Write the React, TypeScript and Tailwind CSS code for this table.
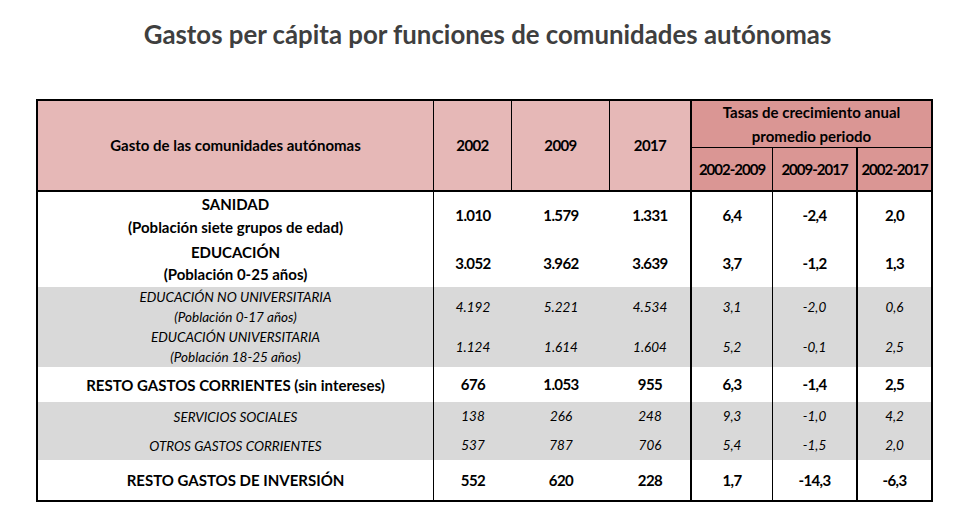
import React from "react";

type Row = {
  label: React.ReactNode;
  vals: string[];
  h: string;
  lead: string;
  gray?: boolean;
  italic?: boolean;
};

const rows: Row[] = [
  {
    label: (
      <>
        <div>SANIDAD</div>
        <div>(Población siete grupos de edad)</div>
      </>
    ),
    vals: ["1.010", "1.579", "1.331", "6,4", "-2,4", "2,0"],
    h: "h-[47px]",
    lead: "leading-[23px]",
  },
  {
    label: (
      <>
        <div>EDUCACIÓN</div>
        <div>(Población 0-25 años)</div>
      </>
    ),
    vals: ["3.052", "3.962", "3.639", "3,7", "-1,2", "1,3"],
    h: "h-[48px]",
    lead: "leading-[22px]",
  },
  {
    label: (
      <>
        <div>EDUCACIÓN NO UNIVERSITARIA</div>
        <div>(Población 0-17 años)</div>
      </>
    ),
    vals: ["4.192", "5.221", "4.534", "3,1", "-2,0", "0,6"],
    h: "h-[40px]",
    lead: "leading-[20px]",
    gray: true,
    italic: true,
  },
  {
    label: (
      <>
        <div>EDUCACIÓN UNIVERSITARIA</div>
        <div>(Población 18-25 años)</div>
      </>
    ),
    vals: ["1.124", "1.614", "1.604", "5,2", "-0,1", "2,5"],
    h: "h-[40px]",
    lead: "leading-[20px]",
    gray: true,
    italic: true,
  },
  {
    label: <div>RESTO GASTOS CORRIENTES (sin intereses)</div>,
    vals: ["676", "1.053", "955", "6,3", "-1,4", "2,5"],
    h: "h-[35px]",
    lead: "leading-[20px]",
  },
  {
    label: <div>SERVICIOS SOCIALES</div>,
    vals: ["138", "266", "248", "9,3", "-1,0", "4,2"],
    h: "h-[29px]",
    lead: "leading-[20px]",
    gray: true,
    italic: true,
  },
  {
    label: <div>OTROS GASTOS CORRIENTES</div>,
    vals: ["537", "787", "706", "5,4", "-1,5", "2,0"],
    h: "h-[29px]",
    lead: "leading-[20px]",
    gray: true,
    italic: true,
  },
  {
    label: <div>RESTO GASTOS DE INVERSIÓN</div>,
    vals: ["552", "620", "228", "1,7", "-14,3", "-6,3"],
    h: "h-[40px]",
    lead: "leading-[20px]",
  },
];

const valBorders = ["", "", "border-r-2", "border-r", "border-r-2", ""];

export default function App() {
  return (
    <div className="w-[968px] h-[521px] bg-white overflow-hidden font-['Lato',sans-serif]">
      <h1 className="pt-[18px] pl-[7px] text-center text-[25.8px] font-bold text-[#3f3f3f] leading-[32px]">
        Gastos per cápita por funciones de comunidades autónomas
      </h1>
      <div className="ml-[36px] mt-[49px] w-[897px] border-2 border-black text-[15px] text-black">
        {/* header */}
        <div className="grid grid-cols-[396px_78px_98px_82px_81px_85px_73px] grid-rows-[47px_42px] border-b-2 border-black font-bold">
          <div className="row-span-2 col-start-1 row-start-1 bg-[#e6b8b7] border-r border-black flex items-center justify-center">
            Gasto de las comunidades autónomas
          </div>
          <div className="row-span-2 col-start-2 row-start-1 bg-[#e6b8b7] border-r border-black flex items-center justify-center tracking-[-0.6px]">
            2002
          </div>
          <div className="row-span-2 col-start-3 row-start-1 bg-[#e6b8b7] border-r border-black flex items-center justify-center tracking-[-0.6px]">
            2009
          </div>
          <div className="row-span-2 col-start-4 row-start-1 bg-[#e6b8b7] border-r-2 border-black flex items-center justify-center tracking-[-0.6px]">
            2017
          </div>
          <div className="col-span-3 col-start-5 row-start-1 bg-[#da9694] border-b border-black flex flex-col items-center justify-center leading-[24px]">
            <div>Tasas de crecimiento anual</div>
            <div>promedio periodo</div>
          </div>
          <div className="col-start-5 row-start-2 bg-[#da9694] border-r border-black flex items-center justify-center whitespace-nowrap tracking-[-1px]">
            2002-2009
          </div>
          <div className="col-start-6 row-start-2 bg-[#da9694] border-r-2 border-black flex items-center justify-center whitespace-nowrap tracking-[-1px]">
            2009-2017
          </div>
          <div className="col-start-7 row-start-2 bg-[#da9694] flex items-center justify-center whitespace-nowrap tracking-[-1px]">
            2002-2017
          </div>
        </div>
        {rows.map((r, i) => (
          <div
            key={i}
            className={`grid grid-cols-[396px_78px_98px_82px_81px_85px_73px] ${r.h} ${
              r.gray ? "bg-[#d9d9d9]" : "bg-white"
            } ${r.italic ? "italic text-[13.5px] text-black" : "font-bold"}`}
          >
            <div className={`border-r border-black flex flex-col items-center justify-center text-center ${r.lead}`}>
              {r.label}
            </div>
            {r.vals.map((v, j) => (
              <div
                key={j}
                className={`${valBorders[j]} border-black flex items-center justify-center ${
                  r.italic ? "tracking-[0px]" : "tracking-[-0.6px]"
                }`}
              >
                {v}
              </div>
            ))}
          </div>
        ))}
      </div>
    </div>
  );
}
